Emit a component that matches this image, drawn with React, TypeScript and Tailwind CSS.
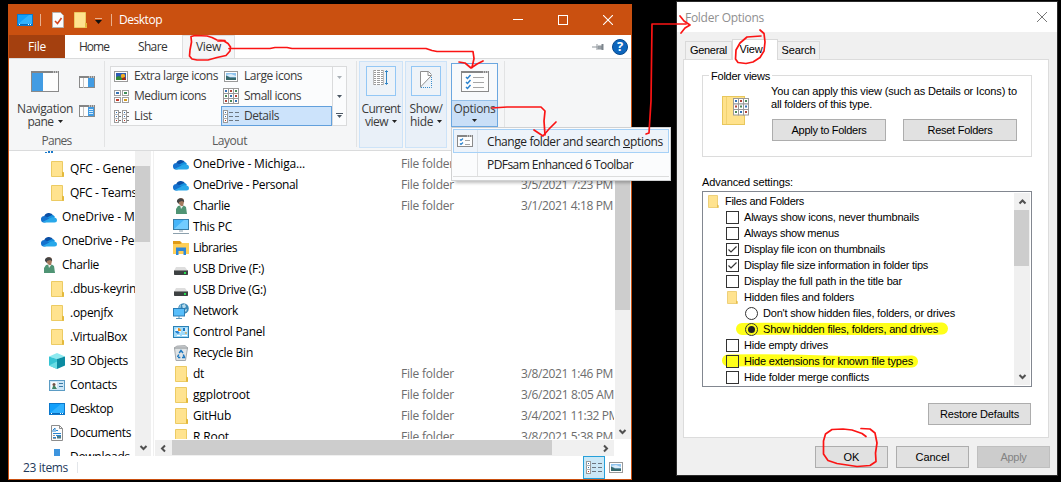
import { useLayoutEffect, useRef, useState, type ReactNode } from "react";

/* Text run whose tracking is computed so that it fills the given width. */
function T({ w, className = "", children }: { w: number; className?: string; children: string }) {
  const ref = useRef<HTMLSpanElement>(null);
  const [spacing, setSpacing] = useState(0);
  useLayoutEffect(() => {
    if (ref.current) setSpacing((w - ref.current.getBoundingClientRect().width) / children.length);
  }, []);
  return (
    <span ref={ref} className={`inline-block w-max shrink-0 whitespace-pre ${className}`} style={{ letterSpacing: spacing }}>
      {children}
    </span>
  );
}

function Svg({ w, h, className = "", children }: { w: number; h: number; className?: string; children: ReactNode }) {
  return (
    <svg width={w} height={h} viewBox={`0 0 ${w} ${h}`} className={`block shrink-0 ${className}`} fill="none">
      {children}
    </svg>
  );
}

/* ---------- small icons (16px) ---------- */
const FolderIcon = () => (
  <Svg w={16} h={16}>
    <path d="M2.5.5h11v10.5l1 1v3.5h-12z" fill="#ffe38f" stroke="#eccb63" />
    <path d="M13.5 15.5v-4.5l1 .5v4z" fill="#ffe9a6" stroke="#e3b93c" />
  </Svg>
);
const CloudIcon = () => (
  <Svg w={16} h={16}>
    <path d="M3 8a5 5 0 0 1 9.300-1.500L8 10z" fill="#0a4fa5" />
    <path d="M0 10.500a3.200 3.200 0 0 1 4.500-3.300L11 11l-7 2.500H3A3 3 0 0 1 0 10.500z" fill="#1572ce" />
    <path d="M6 8.500l5-2.500a4 4 0 0 1 3 2L11 11z" fill="#1490df" />
    <path d="M1.500 13L10 8.800c2-1 6-.3 6 2.200a2.500 2.500 0 0 1-2.500 2.500H3z" fill="#28a8ea" />
  </Svg>
);
const PersonIcon = () => (
  <Svg w={16} h={16}>
    <path d="M3 16V11l2-3 5-1 3 2 1 7z" fill="#4f9474" />
    <path d="M7 7l1 4 3-4z" fill="#e9eeea" />
    <path d="M5 3c0-4 7-4 6 1l-1 4H8L6 6z" fill="#a57a5f" />
    <path d="M4 4c-1-5 8-5 7 0l-2-1-3 1v2z" fill="#444" />
  </Svg>
);
const PcIcon = () => (
  <Svg w={16} h={16}>
    <rect x=".5" y=".5" width="15" height="10" fill="#46b5fa" stroke="#397da7" />
    <path d="M1 10L11 1h4v9z" fill="#72ccff" />
    <path d="M6 12h4M0 14.500h16" stroke="#8ca0ad" />
  </Svg>
);
const LibraryIcon = () => (
  <Svg w={16} h={16}>
    <path d="M0 1h7l2 2v2H0z" fill="#e09b16" />
    <path d="M0 4h7l2-1h7v11H0z" fill="#ffcf57" />
    <path d="M3 15V7.500h10V15h-2.500v-4h-5v4z" fill="#3088d7" />
  </Svg>
);
const DriveIcon = () => (
  <Svg w={16} h={16}>
    <path d="M3 6h9l3 4H1z" fill="#dedede" />
    <rect x="1" y="9" width="14" height="5" rx=".7" fill="#3d4142" />
    <path d="M1 9.500h14" stroke="#888" />
    <rect x="11" y="11" width="2" height="2" fill="#29e052" />
  </Svg>
);
const NetworkIcon = () => (
  <Svg w={16} h={16}>
    <circle cx="10.500" cy="5.500" r="5.300" fill="#3c8ab8" />
    <path d="M8 1c-2 2-2 5-1 7M9 2l3-1 1 3-3 2zM11 7l3-1-1 3z" fill="#b9dcec" />
    <rect x=".5" y="5.500" width="11" height="7.500" fill="#58befb" stroke="#2a7cb5" />
    <path d="M6 13v2M3 15.500h6" stroke="#5b94b8" />
  </Svg>
);
const ControlPanelIcon = () => (
  <Svg w={16} h={16}>
    <rect x=".5" y="2.500" width="15" height="11" fill="#9ddafa" stroke="#2c81b5" />
    <circle cx="5" cy="7" r="3" fill="#e8f7ff" />
    <path d="M5 7V4a3 3 0 0 1 3 3z" fill="#e98f21" />
    <path d="M5 7H2a3 3 0 0 0 5 2z" fill="#2383d4" />
    <path d="M10 5h4M10 7h4M4 11.500h3M9 11.500h5" stroke="#fff" />
    <rect x="10" y="4" width="2" height="3" fill="#1d77c1" />
    <path d="M12 9h2" stroke="#e98f21" />
  </Svg>
);
const RecycleIcon = () => (
  <Svg w={16} h={16}>
    <path d="M1.500 3l1.500 12.500h9.500L14.500 3z" fill="#dfe3e5" stroke="#a4a9ac" />
    <path d="M1 3l3-2 8-.5L15 3z" fill="#c3c7c9" stroke="#9b9fa2" strokeWidth=".7" />
    <path d="M6.200 8l1.800-2.500L10 8M4.500 12l1.300-2.500M5 12.500h2.300M9 12.500h2.500L10.300 9.500" stroke="#1c78c0" strokeWidth="1.500" />
  </Svg>
);
const CubeIcon = () => (
  <Svg w={16} h={16}>
    <path d="M0 3.500L8 0l8 3.500L8 6z" fill="#8deaf0" />
    <path d="M0 3.500L8 6v10l-8-3.500z" fill="#35c4d3" />
    <path d="M16 3.500L8 6v10l8-3.500z" fill="#0b8ba1" />
    <path d="M0 12.500L8 8.500V16z" fill="#69dce4" />
  </Svg>
);
const ContactsIcon = () => (
  <Svg w={16} h={16}>
    <rect x=".5" y="3.500" width="15" height="10" fill="#cde6f7" stroke="#5b9cc4" />
    <rect x="2" y="5" width="6" height="7" fill="#f7fafc" />
    <path d="M3 12l1-3h2l2 3z" fill="#3f8467" />
    <circle cx="5" cy="7.500" r="1.500" fill="#6e5146" />
    <path d="M10 6.500h4M10 9.500h4" stroke="#3a7ba6" />
  </Svg>
);
const DesktopIcon = () => (
  <Svg w={16} h={16}>
    <rect x=".5" y="2.500" width="15" height="11" fill="#12a0fb" stroke="#0b78cc" />
    <path d="M1 12L12 3h3v9z" fill="#31b2ff" />
    <path d="M1 12.500h14" stroke="#0a69b8" />
    <path d="M2 12.500h1M11 12.500h1M13 12.500h1" stroke="#fff" />
  </Svg>
);
const DocumentIcon = () => (
  <Svg w={16} h={16}>
    <path d="M2.500.5h8l3 3v12h-11z" fill="#fcfcfc" stroke="#8d8d8d" />
    <path d="M10.500.5v3h3" stroke="#8d8d8d" />
    <path d="M4 7V5l2-2v4M7 5.500h2M4 8.500h8M7 10.500h5M4 12.500h3" stroke="#2a85cf" />
    <rect x="8" y="11" width="4" height="2.500" fill="#4b7b8a" />
    <path d="M4 10.500h2M4 13.500h3" stroke="#999" />
  </Svg>
);
const DownloadIcon = () => (
  <Svg w={16} h={16}>
    <path d="M5 0h6v8h4l-7 7-7-7h4z" fill="#3d94de" />
  </Svg>
);
const ChipIcon = () => (
  <Svg w={16} h={16}>
    <path d="M0 14h2v1H0zM3 13h2v2H3zM6 13h2v2H6z" fill="#1979ca" />
  </Svg>
);

/* ---------- ribbon icons ---------- */
const WindowFrame = ({ w, h }: { w: number; h: number }) => (
  <>
    <rect x=".5" y=".5" width={w - 1} height={h - 1} fill="#fdfdfd" stroke="#8a8a8a" />
    <path d={`M0 1H${w}`} stroke="#858585" strokeWidth="2" />
    <path d={`M${w - 6} 1h1M${w - 4} 1h1M${w - 2} 1h1`} stroke="#fff" />
  </>
);
const NavPaneIcon = () => (
  <Svg w={28} h={21}>
    <WindowFrame w={28} h={21} />
    <rect x="1" y="2" width="11" height="18" fill="#429ce3" />
  </Svg>
);
const PreviewPaneIcon = ({ lines = false }: { lines?: boolean }) => (
  <Svg w={16} h={12}>
    <WindowFrame w={16} h={12} />
    <path d="M4.500 2v10" stroke="#c5c5c5" />
    <rect x="9" y="2" width="6" height="9" fill="#429ce3" />
    {lines && <path d="M10 4.500h4M10 6.500h4M10 8.500h4" stroke="#d5ebfb" />}
  </Svg>
);
const PictureIcon = ({ vivid = false }: { vivid?: boolean }) => (
  <Svg w={14} h={11}>
    <rect x=".5" y=".5" width="13" height="10" fill="#fff" stroke="#9a9a9a" />
    <rect x="2" y="2" width="10" height="7" fill={vivid ? "#2b5bb5" : "#8fc3ee"} />
    {vivid ? (
      <>
        <path d="M2 9V6l3-1 3 2v2z" fill="#338a3b" />
        <circle cx="9" cy="5" r="2.200" fill="#f0ae24" />
        <path d="M8 9V7l3-1 1 3z" fill="#a12a19" />
      </>
    ) : (
      <>
        <path d="M2 4l5-1 5 2v1H6z" fill="#dcedf9" />
        <path d="M2 9V4.500l4 2h6V9z" fill="#37696c" />
      </>
    )}
  </Svg>
);
const MediumIcon = () => (
  <Svg w={15} h={13}>
    {[0, 8].map((x) =>
      [0, 7].map((y) => (
        <g key={`${x}-${y}`}>
          <rect x={x + 0.5} y={y + 0.5} width="6" height="5" fill="#fff" stroke="#a0a0a0" />
          <rect x={x + 2} y={y + 2} width="3" height="2" fill={y ? (x ? "#d39a1f" : "#c03a2a") : x ? "#3e8f5a" : "#3472b5"} />
        </g>
      )),
    )}
  </Svg>
);
const GridIcon = () => (
  <Svg w={16} h={16}>
    {[0, 5, 10].map((x, i) =>
      [0, 5, 10].map((y, j) => (
        <g key={`${x}-${y}`}>
          <rect x={x + 0.5} y={y + 0.5} width="5" height="5" fill="#fff" stroke="#9a9a9a" />
          <rect x={x + 2} y={y + 2} width="2" height="2" fill={["#3472b5", "#b2453a", "#4b8a5a"][(i + 2 * j) % 3]} />
        </g>
      )),
    )}
  </Svg>
);
const ListIcon = () => (
  <Svg w={15} h={13}>
    {[0, 8].map((x) => (
      <g key={x}>
        <rect x={x + 0.5} y=".5" width="4" height="12" fill="#fff" stroke="#9a9a9a" />
        <path d={`M${x} 4.500h4M${x} 8.500h4`} stroke="#b8b8b8" />
        <path d={`M${x + 2} 2.500h1M${x + 2} 6.500h1`} stroke="#2f6fb0" />
        <path d={`M${x + 2} 10.500h1`} stroke="#c03a2a" />
        <path d={`M${x + 5} 2.500h2M${x + 5} 6.500h2M${x + 5} 10.500h2`} stroke="#777" />
      </g>
    ))}
  </Svg>
);
const DetailsIcon = () => (
  <Svg w={16} h={13}>
    <rect x=".5" y=".5" width="4" height="12" fill="#fff" stroke="#9a9a9a" />
    <path d="M0 4.500h4M0 8.500h4" stroke="#b0b0b0" />
    <path d="M2 2.500h1M2 6.500h1" stroke="#2f6fb0" />
    <path d="M2 10.500h1" stroke="#c03a2a" />
    <path d="M6 2.500h4M12 2.500h4M6 6.500h4M12 6.500h4M6 10.500h4M12 10.500h4" stroke="#6c7782" />
  </Svg>
);
const ColumnsIcon = () => (
  <Svg w={16} h={16}>
    <rect width="11" height="15" fill="#fff" />
    <path d="M0 .5h11M0 2.500h11M0 4.500h11M0 6.500h11M0 8.500h11M0 10.500h11M0 12.500h11M0 14.500h11" stroke="#9c9c9c" strokeDasharray="3 1" />
    <path d="M.5 0v15M10.500 0v15" stroke="#bdbdbd" />
    <path d="M13.500 1v13" stroke="#2f84c5" />
    <path d="M12 2L13.500.5 15 2M12 13l1.500 1.500L15 13" stroke="#2f84c5" />
  </Svg>
);
const HiddenIcon = () => (
  <Svg w={13} h={17}>
    <path d="M.5 16.500V.5h8l3 3" stroke="#8f8f8f" fill="#fff" />
    <path d="M.5 16L11.500 4.500h-3.500v-4" stroke="#8f8f8f" />
    <path d="M11.500 6v10.500H1" stroke="#378ccc" strokeDasharray="1 1" />
  </Svg>
);
const OptionsIcon = () => (
  <Svg w={28} h={21}>
    <WindowFrame w={28} h={21} />
    <path d="M5 6l1.500 1.500L9.500 4M5 11l1.500 1.500L9.500 9M5 16l1.500 1.500L9.500 14" stroke="#2c83ce" strokeWidth="1.500" />
    <path d="M12 6.500h11M12 11.500h11M12 16.500h11" stroke="#a5a5a5" />
  </Svg>
);
const SmallOptionsIcon = () => (
  <Svg w={16} h={12}>
    <WindowFrame w={16} h={12} />
    <path d="M3 4.500l1 1L6 3.500M3 8.500l1 1L6 7.500" stroke="#2c83ce" strokeWidth="1.200" />
    <path d="M8 5.500h5M8 9.500h5" stroke="#a5a5a5" />
  </Svg>
);
const Caret = ({ color = "#222" }: { color?: string }) => (
  <Svg w={5} h={3}>
    <path d="M0 0h5L2.500 3z" fill={color} />
  </Svg>
);
const Chevron = ({ dir }: { dir: "up" | "down" | "left" | "right" }) => (
  <Svg w={9} h={9}>
    <path
      d={{ up: "M1.500 6.500l3-3 3 3", down: "M1.500 3l3 3 3-3", left: "M6 1.500l-3 3 3 3", right: "M3 1.500l3 3-3 3" }[dir]}
      stroke="#505050"
      strokeWidth="2"
    />
  </Svg>
);

/* ---------- explorer window ---------- */
function TitleBar() {
  return (
    <div className="flex h-[31px] items-center bg-[#ca5010] pl-[8px] text-white">
      <DesktopIcon />
      <div className="ml-[7px] h-3 w-px bg-[#e9b08f]" />
      <Svg w={12} h={16} className="ml-[11px]">
        <path d="M.5.5h8l3 3v12H.5z" fill="#fbfbfb" stroke="#b5b0ac" />
        <path d="M3 9l2.500 2.500L9.500 6" stroke="#d2451e" strokeWidth="1.600" />
      </Svg>
      <div className="ml-[8px]">
        <FolderIcon />
      </div>
      <Svg w={7} h={6} className="mt-[2px] ml-[7px]">
        <path d="M0 .5h7" stroke="#e9b08f" />
        <path d="M0 2h7L3.500 6z" fill="#111" />
      </Svg>
      <div className="ml-[9px] h-3 w-px bg-[#e9b08f]" />
      <T w={43} className="ml-[7px]">Desktop</T>
      <div className="ml-auto flex">
        <div className="flex w-[45px] justify-center"><Svg w={10} h={10}><path d="M0 4.500h10" stroke="#fff" /></Svg></div>
        <div className="flex w-[45px] justify-center"><Svg w={10} h={10}><rect x=".5" y=".5" width="9" height="9" stroke="#fff" /></Svg></div>
        <div className="flex w-[46px] justify-center"><Svg w={10} h={10}><path d="M0 0l10 10M10 0L0 10" stroke="#fff" strokeWidth="1.100" /></Svg></div>
      </div>
    </div>
  );
}

function TabRow() {
  return (
    <div className="flex h-[23px] bg-white text-[#333]">
      <div className="flex w-14 items-center justify-center bg-[#a4400f] pt-px text-white"><T w={18}>File</T></div>
      <div className="flex w-[58px] items-center justify-center pt-px"><T w={30}>Home</T></div>
      <div className="flex w-[59px] items-center justify-center pt-px"><T w={29}>Share</T></div>
      <div className="flex w-[53px] items-center justify-center border border-b-0 border-[#dedfe0] bg-[#f5f6f7]"><T w={25}>View</T></div>
      <div className="ml-auto flex items-center gap-2 pr-[3px]">
        <Svg w={12} h={8}>
          <path d="M0 4h5" stroke="#8f969c" />
          <path d="M5 1v6M6 3h4v3H6z" fill="#9aa1a7" stroke="#8f969c" />
          <path d="M10.500 1v6" stroke="#7c858c" strokeWidth="2" />
        </Svg>
        <div className="flex size-4 items-center justify-center rounded-full border border-[#07498e] bg-[#0d66bd] text-[13px] leading-none font-bold text-white">?</div>
      </div>
    </div>
  );
}

const galleryItems: { icon: ReactNode; name: string; w: number; on?: boolean }[] = [
  { icon: <PictureIcon vivid />, name: "Extra large icons", w: 84 },
  { icon: <PictureIcon />, name: "Large icons", w: 58 },
  { icon: <MediumIcon />, name: "Medium icons", w: 72 },
  { icon: <GridIcon />, name: "Small icons", w: 57 },
  { icon: <ListIcon />, name: "List", w: 18 },
  { icon: <DetailsIcon />, name: "Details", w: 35, on: true },
];

function Ribbon() {
  return (
    <div className="flex h-[93px] border-y border-[#dadbdc] bg-[#f5f6f7] text-[#3b3b3b]">
      <div className="flex w-[95px] flex-col">
        <div className="flex h-[72px] pt-[12px]">
          <div className="flex w-[72px] shrink-0 flex-col items-center leading-[13px]">
            <NavPaneIcon />
            <T w={56} className="mt-[10px]">Navigation</T>
            <div className="flex items-center gap-1"><T w={26}>pane</T><Caret /></div>
          </div>
          <div className="-ml-[2px] flex flex-col gap-[17px] pt-[5px]">
            <PreviewPaneIcon />
            <PreviewPaneIcon lines />
          </div>
        </div>
        <T w={30} className="mt-[2px] self-center text-[#5a5a5a]">Panes</T>
      </div>
      <div className="mt-[2px] h-[86px] w-px bg-[#e2e3e4]" />
      <div className="flex w-[251px] flex-col pt-[7px]">
        <div className="ml-[5px] flex h-[60px] w-[237px] border border-[#dadbdc] bg-[#fbfcfd]">
          <div className="-mt-px grid h-[60px] w-[221px] shrink-0 grid-cols-[110px_111px] grid-rows-3">
            {galleryItems.map((g) => (
              <div
                key={g.name}
                className={
                  g.on
                    ? "flex h-5 items-center border border-[#62a0dc] bg-[#cce3fb] pl-[1px]"
                    : "flex h-5 items-center pl-[2px]"
                }
              >
                <div className="flex w-[16px] justify-center">{g.icon}</div>
                <T w={g.w} className="ml-[5px]">{g.name}</T>
              </div>
            ))}
          </div>
          <div className="flex flex-1 flex-col items-center justify-between border-l border-[#dadbdc] pt-[9px] pb-[7px]">
            <Caret color="#a9b0b6" />
            <Caret color="#4b5763" />
            <div><div className="mb-px -ml-px h-px w-[7px] bg-[#4b5763]" /><Caret color="#4b5763" /></div>
          </div>
        </div>
        <T w={35} className="mt-[7px] ml-[107px] self-start text-[#5a5a5a]">Layout</T>
      </div>
      <div className="mt-[2px] h-[86px] w-px bg-[#e2e3e4]" />
      <div className="mt-[2px] ml-[2px] flex h-[87px] w-[44px] flex-col items-center border border-[#cde3f8] bg-[#e9f0f8] pt-[4px] leading-[13px]">
        <div className="flex h-[30px] w-[30px] items-center justify-center border border-[#93c7f5] bg-[#eef3f8] pb-[6px]"><ColumnsIcon /></div>
        <T w={39} className="mt-[6px]">Current</T>
        <div className="flex items-center gap-1"><T w={23}>view</T><Caret /></div>
      </div>
      <div className="mt-[2px] ml-[2px] flex h-[87px] w-[42px] flex-col items-center border border-[#cde3f8] bg-[#e9f0f8] pt-[4px] leading-[13px]">
        <div className="flex h-[30px] w-[30px] items-center justify-center border border-[#93c7f5] bg-[#eef3f8] pb-1"><HiddenIcon /></div>
        <T w={33} className="mt-[6px]">Show/</T>
        <div className="flex items-center gap-1"><T w={23}>hide</T><Caret /></div>
      </div>
      <div className="mt-[4px] ml-[4px] flex h-[64px] w-[47px] flex-col border border-[#6ba7e0] leading-[13px]">
        <div className="flex h-[37px] justify-center border-b border-[#93bfe9] bg-[#f7f9fb] pt-[7px]"><OptionsIcon /></div>
        <div className="flex flex-1 flex-col items-center bg-[#c9dff7] pt-[1px]">
          <T w={42}>Options</T>
          <div className="mt-[4px]"><Caret /></div>
        </div>
      </div>
      <div className="mt-[2px] ml-[6px] h-[86px] w-px bg-[#e2e3e4]" />
    </div>
  );
}

const navItems: { icon: ReactNode; name: string; w: number; top?: boolean }[] = [
  { icon: <FolderIcon />, name: "QFC - General", w: 76 },
  { icon: <FolderIcon />, name: "QFC - Teams", w: 67 },
  { icon: <CloudIcon />, name: "OneDrive - Michigan", w: 112, top: true },
  { icon: <CloudIcon />, name: "OneDrive - Personal", w: 105, top: true },
  { icon: <PersonIcon />, name: "Charlie", w: 37, top: true },
  { icon: <FolderIcon />, name: ".dbus-keyrings", w: 78 },
  { icon: <FolderIcon />, name: ".openjfx", w: 43 },
  { icon: <FolderIcon />, name: ".VirtualBox", w: 57 },
  { icon: <CubeIcon />, name: "3D Objects", w: 58 },
  { icon: <ContactsIcon />, name: "Contacts", w: 47 },
  { icon: <DesktopIcon />, name: "Desktop", w: 43 },
  { icon: <DocumentIcon />, name: "Documents", w: 61 },
  { icon: <DownloadIcon />, name: "Downloads", w: 60 },
];

const files: { icon: ReactNode; name: string; w: number; date?: string; dw?: number }[] = [
  { icon: <CloudIcon />, name: "OneDrive - Michiga...", w: 112, date: "", dw: 92 },
  { icon: <CloudIcon />, name: "OneDrive - Personal", w: 105, date: "3/5/2021 7:23 PM", dw: 92 },
  { icon: <PersonIcon />, name: "Charlie", w: 37, date: "3/1/2021 4:18 PM", dw: 92 },
  { icon: <PcIcon />, name: "This PC", w: 39 },
  { icon: <LibraryIcon />, name: "Libraries", w: 44 },
  { icon: <DriveIcon />, name: "USB Drive (F:)", w: 71 },
  { icon: <DriveIcon />, name: "USB Drive (G:)", w: 73 },
  { icon: <NetworkIcon />, name: "Network", w: 45 },
  { icon: <ControlPanelIcon />, name: "Control Panel", w: 72 },
  { icon: <RecycleIcon />, name: "Recycle Bin", w: 60 },
  { icon: <FolderIcon />, name: "dt", w: 11, date: "3/8/2021 1:46 PM", dw: 92 },
  { icon: <FolderIcon />, name: "ggplotroot", w: 57, date: "3/6/2021 8:05 AM", dw: 93 },
  { icon: <FolderIcon />, name: "GitHub", w: 38, date: "3/4/2021 11:32 PM", dw: 98 },
  { icon: <FolderIcon />, name: "R Root", w: 36, date: "3/8/2021 5:38 PM", dw: 92 },
];

function Explorer() {
  return (
    <div className="mt-1 ml-2 flex h-[476px] w-[624px] flex-col border border-t-0 border-[#ca5010] bg-white font-['Open_Sans','Noto_Sans',sans-serif] text-[12px] leading-[16px] text-black">
      <TitleBar />
      <TabRow />
      <Ribbon />
      <div className="flex h-[305px]">
        <div className="relative w-[126px] overflow-hidden pt-[6px]">
          <div className="absolute -top-[13px] left-[36px]"><ChipIcon /></div>
          {navItems.map((n, i) => (
            <div key={i} className={`flex h-6 items-center ${n.top ? "pl-[32px]" : "pl-[40px]"}`}>
              {n.icon}
              <T w={n.w} className="ml-[5px]">{n.name}</T>
            </div>
          ))}
        </div>
        <div className="flex w-[16px] flex-col bg-[#f0f0f0]">
          <div className="mt-[15px] h-[76px] w-[15px] bg-[#cdcdcd]" />
          <div className="mt-auto mb-[4px] flex justify-center"><Chevron dir="down" /></div>
        </div>
        <div className="mr-[1px] ml-[2px] w-px bg-[#f0f0f0]" />
        <div className="flex w-[459px] flex-col">
          <div className="h-[288px] overflow-hidden pt-[2px]">
            {files.map((f, i) => (
              <div key={i} className="flex h-[21px] items-center pl-[18px]">
                {f.icon}
                <div className="ml-[4px] w-[208px] shrink-0"><T w={f.w}>{f.name}</T></div>
                {f.date !== undefined && (
                  <div className="w-[120px] shrink-0 text-[#6d6d6d]"><T w={53}>File folder</T></div>
                )}
                {f.date && <T w={f.dw!} className="text-[#6d6d6d]">{f.date}</T>}
              </div>
            ))}
          </div>
          <div className="mt-px flex h-[16px] items-center bg-[#f0f0f0]">
            <div className="flex w-[17px] justify-center"><Chevron dir="left" /></div>
            <div className="h-[15px] w-[380px] self-start bg-[#cdcdcd]" />
            <div className="mr-[4px] ml-auto"><Chevron dir="right" /></div>
          </div>
        </div>
        <div className="ml-px flex h-[288px] flex-1 flex-col bg-[#f0f0f0]">
          <div className="h-[159px] w-[15px] bg-[#cdcdcd]" />
          <div className="mt-auto mb-[3px] ml-[3px]"><Chevron dir="down" /></div>
        </div>
      </div>
      <div className="flex flex-1 items-center pl-[14px]">
        <T w={45} className="text-[#1e395b]">23 items</T>
        <div className="ml-[9px] h-[11px] w-px bg-[#e3e6ea]" />
        <div className="ml-auto flex h-[23px] w-[22px] items-center justify-center border border-[#26a0da] bg-[#cbe8f6]"><DetailsIcon /></div>
        <div className="mr-[8px] ml-[4px]"><PictureIcon /></div>
      </div>
    </div>
  );
}

function OptionsMenu() {
  return (
    <div className="absolute top-[127px] left-[451px] h-[54px] w-[220px] border border-[#d0d1d2] bg-[#fbfcfd] pt-[1px] font-['Open_Sans','Noto_Sans',sans-serif] text-[12px] leading-[16px] text-[#222] shadow-[3px_3px_3px_-1px_rgba(0,0,0,0.25)]">
      <div className="mx-px flex h-[24px] items-center border border-[#a6d1f7] bg-[#edf3fa]">
        <div className="flex h-full w-[24px] items-center border-r border-[#dce3ea] pl-[3px]"><SmallOptionsIcon /></div>
        <span className="ml-[9px] flex pt-px">
          <T w={136}>Change folder and search </T>
          <T w={7} className="underline">o</T>
          <T w={33}>ptions</T>
        </span>
      </div>
      <div className="mx-px flex h-[24px] items-center border-b border-[#dcdddd]">
        <div className="h-full w-[25px] border-r border-[#e0e1e2]" />
        <T w={146} className="mt-px ml-[9px]">PDFsam Enhanced 6 Toolbar</T>
      </div>
    </div>
  );
}

/* ---------- folder options dialog ---------- */
function Button({ label, w, className, off = false }: { label: string; w: number; className: string; off?: boolean }) {
  return (
    <div
      className={`flex h-[22px] items-center justify-center border ${off ? "border-[#bfbfbf] bg-[#cccccc] text-[#838383]" : "border-[#adadad] bg-[#e1e1e1]"} ${className}`}
    >
      <T w={w}>{label}</T>
    </div>
  );
}

type Setting = { kind: "folder" | "check" | "radio"; on?: boolean; indent: 0 | 1 | 2; name: string; w: number; lit?: boolean };
const settings: Setting[] = [
  { kind: "folder", indent: 0, name: "Files and Folders", w: 79 },
  { kind: "check", indent: 1, name: "Always show icons, never thumbnails", w: 175 },
  { kind: "check", indent: 1, name: "Always show menus", w: 95 },
  { kind: "check", on: true, indent: 1, name: "Display file icon on thumbnails", w: 141 },
  { kind: "check", on: true, indent: 1, name: "Display file size information in folder tips", w: 184 },
  { kind: "check", indent: 1, name: "Display the full path in the title bar", w: 158 },
  { kind: "folder", indent: 1, name: "Hidden files and folders", w: 110 },
  { kind: "radio", indent: 2, name: "Don't show hidden files, folders, or drives", w: 192 },
  { kind: "radio", on: true, indent: 2, name: "Show hidden files, folders, and drives", w: 175, lit: true },
  { kind: "check", indent: 1, name: "Hide empty drives", w: 84 },
  { kind: "check", indent: 1, name: "Hide extensions for known file types", w: 169, lit: true },
  { kind: "check", indent: 1, name: "Hide folder merge conflicts", w: 125 },
];

function SettingIcon({ s }: { s: Setting }) {
  if (s.kind === "folder")
    return (
      <Svg w={13} h={13}>
        <path d="M1.500.5h9v9l1 1v2h-10z" fill="#ffe38f" stroke="#eed07a" />
        <path d="M10.500 12.500v-3" stroke="#e5bf4d" />
      </Svg>
    );
  if (s.kind === "check")
    return (
      <Svg w={13} h={13}>
        <rect x=".5" y=".5" width="12" height="12" stroke="#333" fill={s.lit ? "#ffff1a" : "#fff"} />
        {s.on && <path d="M2.500 6.500L5 9l5.500-5.500" stroke="#333" strokeWidth="1.200" />}
      </Svg>
    );
  return (
    <Svg w={13} h={13}>
      <circle cx="6.500" cy="6.500" r="6" stroke="#333" />
      {s.on && <circle cx="6.500" cy="6.500" r="3.500" fill="#222" />}
    </Svg>
  );
}

function Dialog() {
  return (
    <div className="mt-px ml-[44px] flex h-[475px] w-[382px] flex-col border border-[#2b2b2b] bg-[#f0f0f0] font-['Liberation_Sans',Arial,sans-serif] text-[11px] leading-[13px] text-black">
      <div className="flex h-[30px] shrink-0 items-center justify-between bg-white pr-[10px] pl-[8px] font-['Open_Sans','Noto_Sans',sans-serif] text-[12px] text-[#8f8f8f]">
        <T w={79}>Folder Options</T>
        <Svg w={10} h={10}><path d="M0 0l10 10M10 0L0 10" stroke="#777" /></Svg>
      </div>
      <div className="flex h-[27px] shrink-0 items-end pl-[8px]">
        <div className="flex h-[18px] w-[47px] items-center justify-center border border-b-0 border-[#d9d9d9]"><T w={37}>General</T></div>
        <div className="z-10 -mb-px flex h-[21px] w-[46px] items-center justify-center border border-b-0 border-[#d9d9d9] bg-white pr-[8px] pb-[1px]"><T w={23}>View</T></div>
        <div className="flex h-[18px] w-[42px] items-center justify-center border border-b-0 border-l-0 border-[#d9d9d9]"><T w={34}>Search</T></div>
      </div>
      <div className="ml-[6px] flex h-[379px] w-[366px] shrink-0 flex-col border border-[#dcdcdc] bg-white pl-[18px]">
        <fieldset className="relative mt-[15px] flex h-[82px] w-[330px] shrink-0 border border-[#dcdcdc]">
          <div className="absolute -top-[6px] left-[6px] bg-white px-[2px]"><T w={59}>Folder views</T></div>
          <Svg w={28} h={30} className="mt-[20px] ml-[19px]">
            <rect x=".5" y=".5" width="22" height="28" fill="#ffe28c" stroke="#e8c75c" />
            <path d="M4.500 1v27" stroke="#f1d271" />
            {[0, 1, 2].map((i) =>
              [0, 1, 2].map((j) => (
                <g key={`${i}-${j}`}>
                  <rect x={11.500 + i * 5} y={2.500 + j * 5.500} width="5" height="5.500" fill="#fff" stroke="#999" />
                  <rect x={13 + i * 5} y={4 + j * 5.500} width="2" height="2" fill={["#3472b5", "#b2453a", "#4b8a5a"][(i + j) % 3]} />
                </g>
              )),
            )}
          </Svg>
          <div className="ml-[21px] flex flex-col items-start pt-[9px]">
            <T w={246}>You can apply this view (such as Details or Icons) to</T>
            <T w={101}>all folders of this type.</T>
            <div className="mt-[8px] ml-[1px] flex gap-[17px]">
              <Button label="Apply to Folders" w={75} className="w-[114px]" />
              <Button label="Reset Folders" w={65} className="w-[114px]" />
            </div>
          </div>
        </fieldset>
        <T w={91} className="mt-[19px] self-start">Advanced settings:</T>
        <div className="mt-[2px] flex h-[196px] w-[330px] shrink-0 border border-[#828790]">
          <div className="relative flex-1 overflow-hidden pt-[1px]">
            <svg className="absolute inset-0" width="311" height="194" fill="none">
              <path d="M39 137C120 136 180 138 239 136.500" stroke="#ffff1a" strokeWidth="12" strokeLinecap="round" />
              <path d="M25 168.500C90 167 150 172 209 169.500" stroke="#ffff1a" strokeWidth="12" strokeLinecap="round" />
            </svg>
            {settings.map((s) => (
              <div
                key={s.name}
                className={`relative flex h-4 items-center ${s.indent === 0 ? "pl-[4px]" : s.indent === 1 ? "pl-[23px]" : "pl-[42px]"}`}
              >
                <SettingIcon s={s} />
                <T w={s.w} className="ml-[5px]">{s.name}</T>
              </div>
            ))}
          </div>
          <div className="mt-px mr-px flex h-[192px] w-4 flex-col items-center bg-[#f0f0f0]">
            <div className="flex h-[17px] items-center"><Chevron dir="up" /></div>
            <div className="h-[56px] w-[15px] self-start bg-[#cdcdcd]" />
            <div className="mt-auto mb-[4px]"><Chevron dir="down" /></div>
          </div>
        </div>
        <Button label="Restore Defaults" w={79} className="mt-[16px] ml-[226px] w-[103px]" />
      </div>
      <div className="mt-[8px] flex gap-[8px] pl-[138px]">
        <Button label="OK" w={16} className="w-[73px]" />
        <Button label="Cancel" w={34} className="w-[73px]" />
        <Button label="Apply" w={26} className="w-[73px]" off />
      </div>
    </div>
  );
}

/* Hand-drawn red markings over both windows. */
function Annotations() {
  return (
    <svg className="pointer-events-none absolute inset-0 z-20" width="1061" height="482" fill="none">
      <g stroke="#fb1414" strokeWidth="1.700" strokeLinecap="round" strokeLinejoin="round">
        <path d="M225 40.500L217 40 212 37.500 207 36 195 35.500 191 36.500 191.500 42 190 50 189.500 56 192 59 197 60 208 60 217 57.500 226 55.500 230 51 230.500 47 228 43.500 224 41 218 41" />
        <path d="M229 48.500h41l5-1h12l5 1h134l6 2 5 1h36l1 7-2 9" />
        <path d="M459 62l6 1 6 5 6-4 6-3" />
        <path d="M492 108l15-1h34l4 4-1 10 1 14" />
        <path d="M534 130l9 6 6-7 7-7" />
        <path d="M646 134l3-1 2-32 1-77h34" />
        <path d="M680 16l4 5 6 4-5 3-4 5" />
        <path d="M760 30L764 33.500 765 42 764 51 760 57.500 753 62 746 63.500 738 62.500 735.500 59 736 50 740 43 747 37 761 36" />
        <path d="M866 436.500L862 433.500 852 430 843 429 832 429.500 825.500 434 823.500 441 823.500 454 828 460.500 837 463.500 857 466.500 870 465.500 876 461.500 875.500 453 877 443 875 433 870 429 861 428.500" />
      </g>
    </svg>
  );
}

export default function App() {
  return (
    <div className="relative flex h-[482px] w-[1061px] overflow-hidden bg-black">
      <Explorer />
      <Dialog />
      <OptionsMenu />
      <Annotations />
    </div>
  );
}
